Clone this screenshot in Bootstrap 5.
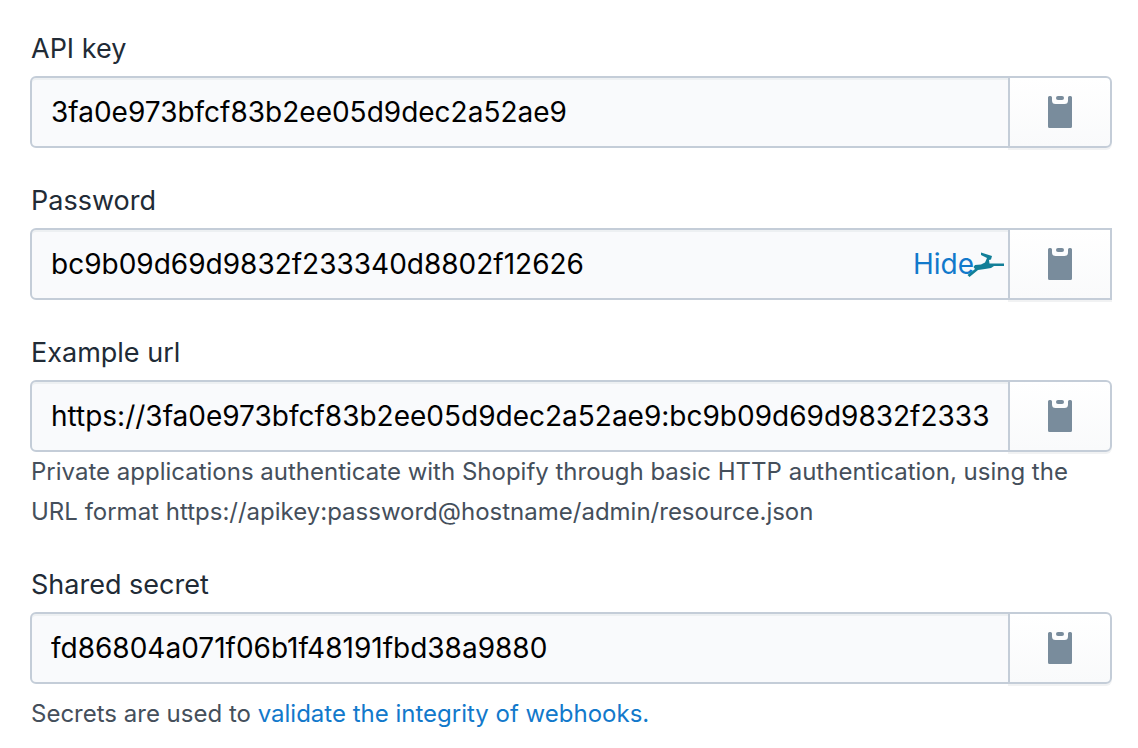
<!DOCTYPE html>
<html lang="en">
<head>
<meta charset="utf-8">
<meta name="viewport" content="width=device-width, initial-scale=1">
<title>Private app credentials</title>
<link href="https://cdn.jsdelivr.net/npm/bootstrap@5.3.0/dist/css/bootstrap.min.css" rel="stylesheet">
<style>
body{font-family:Inter,"Liberation Sans",sans-serif;color:#212b36;background:#fff}
.creds{padding:29px 26px 0 30px}
.form-label{display:block;font-size:27px;line-height:40px;margin:0 0 7px 1px}
.key-group{height:72px}
.key-field{min-width:0;border:2px solid #c4cdd8;border-radius:6px 0 0 6px;background:#f9fafc;box-shadow:inset 0 2px 0 #edf0f2}
.key-field .form-control{border:0;border-radius:0;background:transparent;box-shadow:none;font-size:28px;color:#000;padding:0;margin:0 19px;min-width:0}
.copy-btn{width:104px;flex-shrink:0;border:2px solid #c4cdd8;border-radius:0 6px 6px 0;background:linear-gradient(#fff,#f9fafb);box-shadow:0 2px 0 #f1f2f3;margin-left:-2px;padding:0;color:#798c9c}
.hint{font-size:24px;line-height:40px;color:#454f5b;margin:0 0 0 1px}
.hint-spaced{padding-top:10px}
.hint a,.hide-link{color:#1279cb;text-decoration:none}
.hide-link{font-size:28px;border:0;background:none;padding:0 34px 0 0}
.field-block{margin-bottom:33px}
.swoosh{position:absolute;right:3px;top:20px;color:#127f98}
</style>
</head>
<body>
<svg class="d-none" aria-hidden="true"><symbol id="clip" viewBox="0 0 24 32"><path fill="currentColor" d="M1.500 0h1Q4 0 4 1.500V4.500Q4 8 7.500 8h9Q20 8 20 4.500V1.500Q20 0 21.500 0h1Q24 0 24 1.500v29Q24 32 22.500 32h-21Q0 32 0 30.500v-29Q0 0 1.500 0z"/><rect x="8" width="8" height="4" rx="2" fill="currentColor"/></symbol></svg>
<main class="creds">
  <div class="field-block">
    <label class="form-label" for="api-key">API key</label>
    <div class="key-group d-flex">
      <div class="key-field flex-fill d-flex"><input id="api-key" class="form-control" readonly value="3fa0e973bfcf83b2ee05d9dec2a52ae9"></div>
      <button class="copy-btn d-flex align-items-center justify-content-center" type="button" aria-label="Copy API key"><svg width="24" height="32"><use href="#clip"/></svg></button>
    </div>
  </div>
  <div class="field-block">
    <label class="form-label" for="password">Password</label>
    <div class="key-group d-flex">
      <div class="key-field flex-fill d-flex position-relative"><input id="password" class="form-control" readonly value="bc9b09d69d9832f233340d8802f12626"><button class="hide-link" type="button">Hide</button>
        <svg class="swoosh" width="40" height="30" viewBox="0 0 40 30" fill="currentColor" aria-hidden="true"><path d="M16 2.500 27 6 26 9.500 24 10 24.500 13.500H39V16H29L26 18 20 19 13 20 4.500 27 2.500 25 10 19 8.500 17 10 15 16 14.500 20 12.500 22 8 16 5z"/></svg>
      </div>
      <button class="copy-btn rounded-0 d-flex align-items-center justify-content-center" type="button" aria-label="Copy password"><svg width="24" height="32"><use href="#clip"/></svg></button>
    </div>
  </div>
  <div class="field-block">
    <label class="form-label" for="example-url">Example url</label>
    <div class="key-group d-flex">
      <div class="key-field flex-fill d-flex"><input id="example-url" class="form-control" readonly value="https://3fa0e973bfcf83b2ee05d9dec2a52ae9:bc9b09d69d9832f233340d8802f12626"></div>
      <button class="copy-btn d-flex align-items-center justify-content-center" type="button" aria-label="Copy example url"><svg width="24" height="32"><use href="#clip"/></svg></button>
    </div>
    <p class="hint">Private applications authenticate with Shopify through basic HTTP authentication, using the URL format https://apikey:password@hostname/admin/resource.json</p>
  </div>
  <div>
    <label class="form-label" for="shared-secret">Shared secret</label>
    <div class="key-group d-flex">
      <div class="key-field flex-fill d-flex"><input id="shared-secret" class="form-control" readonly value="fd86804a071f06b1f48191fbd38a9880"></div>
      <button class="copy-btn d-flex align-items-center justify-content-center" type="button" aria-label="Copy shared secret"><svg width="24" height="32"><use href="#clip"/></svg></button>
    </div>
    <p class="hint hint-spaced">Secrets are used to <a href="#">validate the integrity of webhooks.</a></p>
  </div>
</main>
<script src="https://cdn.jsdelivr.net/npm/bootstrap@5.3.0/dist/js/bootstrap.bundle.min.js"></script>
</body>
</html>
